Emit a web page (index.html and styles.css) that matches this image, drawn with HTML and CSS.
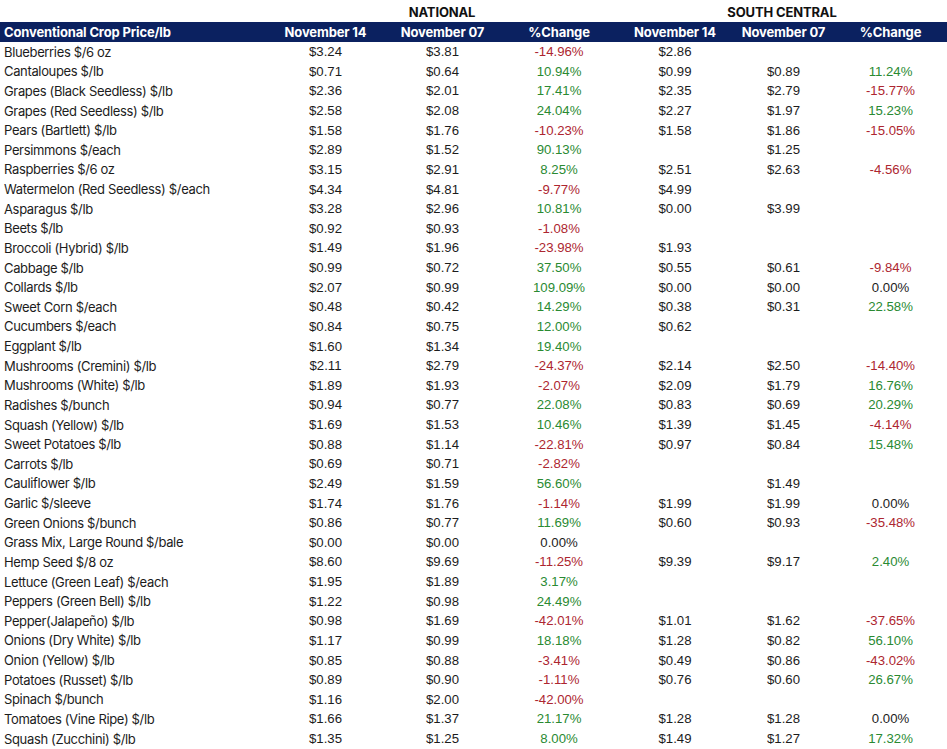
FILE: index.html
```html
<!DOCTYPE html>
<html>
<head>
<meta charset="utf-8">
<link rel="stylesheet" href="styles.css">
</head>
<body>
<div class="sheet">
  <div class="row title">
    <div class="c lab"></div>
    <div class="group national">NATIONAL</div>
    <div class="group south">SOUTH CENTRAL</div>
  </div>
  <div class="row head">
    <div class="c lab">Conventional Crop Price/lb</div>
    <div class="c">November 14</div>
    <div class="c">November 07</div>
    <div class="c">%Change</div>
    <div class="c">November 14</div>
    <div class="c">November 07</div>
    <div class="c">%Change</div>
  </div>
  <div id="rows"></div>
</div>
<script src="script.js"></script>
</body>
</html>
```

FILE: styles.css
```css
html, body {
  margin: 0;
  padding: 0;
  background: #ffffff;
}
.sheet {
  width: 947px;
  color: #1c1c1c;
}
.row {
  display: grid;
  grid-template-columns: 267px 117px 117px 116px 116px 101px 113px;
  height: 19.63px;
  align-items: center;
}
.row.title {
  grid-template-columns: 267px 350px 330px;
  height: 22.2px;
  align-items: end;
  font-family: "Inter", "Liberation Sans", sans-serif;
  font-weight: 700;
  font-size: 13px;
  line-height: 20px;
  letter-spacing: -0.15px;
  color: #111;
}
.group {
  text-align: center;
}
.row.head {
  background: #0b2160;
  color: #ffffff;
  font-family: "Inter", "Liberation Sans", sans-serif;
  font-weight: 700;
  font-size: 13px;
}
.c {
  text-align: center;
  font-family: "Liberation Sans", Arial, sans-serif;
  font-size: 13.2px;
  white-space: nowrap;
}
.row.head .c {
  font-family: "Inter", "Liberation Sans", sans-serif;
  font-size: 13px;
  letter-spacing: -0.15px;
}
.c.lab {
  text-align: left;
  padding-left: 4px;
  font-family: "Inter", "Liberation Sans", sans-serif;
  font-size: 13px;
  letter-spacing: -0.35px;
}
.row.head .c.lab {
  letter-spacing: -0.15px;
}
.pos { color: #2a8a32; }
.neg { color: #ad2630; }
```

FILE: script.js
```js
const data = [
["Blueberries $/6 oz","$3.24","$3.81","-14.96%","$2.86","",""],
["Cantaloupes $/lb","$0.71","$0.64","10.94%","$0.99","$0.89","11.24%"],
["Grapes (Black Seedless) $/lb","$2.36","$2.01","17.41%","$2.35","$2.79","-15.77%"],
["Grapes (Red Seedless) $/lb","$2.58","$2.08","24.04%","$2.27","$1.97","15.23%"],
["Pears (Bartlett) $/lb","$1.58","$1.76","-10.23%","$1.58","$1.86","-15.05%"],
["Persimmons $/each","$2.89","$1.52","90.13%","","$1.25",""],
["Raspberries $/6 oz","$3.15","$2.91","8.25%","$2.51","$2.63","-4.56%"],
["Watermelon (Red Seedless) $/each","$4.34","$4.81","-9.77%","$4.99","",""],
["Asparagus $/lb","$3.28","$2.96","10.81%","$0.00","$3.99",""],
["Beets $/lb","$0.92","$0.93","-1.08%","","",""],
["Broccoli (Hybrid) $/lb","$1.49","$1.96","-23.98%","$1.93","",""],
["Cabbage $/lb","$0.99","$0.72","37.50%","$0.55","$0.61","-9.84%"],
["Collards $/lb","$2.07","$0.99","109.09%","$0.00","$0.00","0.00%"],
["Sweet Corn $/each","$0.48","$0.42","14.29%","$0.38","$0.31","22.58%"],
["Cucumbers $/each","$0.84","$0.75","12.00%","$0.62","",""],
["Eggplant $/lb","$1.60","$1.34","19.40%","","",""],
["Mushrooms (Cremini) $/lb","$2.11","$2.79","-24.37%","$2.14","$2.50","-14.40%"],
["Mushrooms (White) $/lb","$1.89","$1.93","-2.07%","$2.09","$1.79","16.76%"],
["Radishes $/bunch","$0.94","$0.77","22.08%","$0.83","$0.69","20.29%"],
["Squash (Yellow) $/lb","$1.69","$1.53","10.46%","$1.39","$1.45","-4.14%"],
["Sweet Potatoes $/lb","$0.88","$1.14","-22.81%","$0.97","$0.84","15.48%"],
["Carrots $/lb","$0.69","$0.71","-2.82%","","",""],
["Cauliflower $/lb","$2.49","$1.59","56.60%","","$1.49",""],
["Garlic $/sleeve","$1.74","$1.76","-1.14%","$1.99","$1.99","0.00%"],
["Green Onions $/bunch","$0.86","$0.77","11.69%","$0.60","$0.93","-35.48%"],
["Grass Mix, Large Round $/bale","$0.00","$0.00","0.00%","","",""],
["Hemp Seed $/8 oz","$8.60","$9.69","-11.25%","$9.39","$9.17","2.40%"],
["Lettuce (Green Leaf) $/each","$1.95","$1.89","3.17%","","",""],
["Peppers (Green Bell) $/lb","$1.22","$0.98","24.49%","","",""],
["Pepper(Jalapeño) $/lb","$0.98","$1.69","-42.01%","$1.01","$1.62","-37.65%"],
["Onions (Dry White) $/lb","$1.17","$0.99","18.18%","$1.28","$0.82","56.10%"],
["Onion (Yellow) $/lb","$0.85","$0.88","-3.41%","$0.49","$0.86","-43.02%"],
["Potatoes (Russet) $/lb","$0.89","$0.90","-1.11%","$0.76","$0.60","26.67%"],
["Spinach $/bunch","$1.16","$2.00","-42.00%","","",""],
["Tomatoes (Vine Ripe) $/lb","$1.66","$1.37","21.17%","$1.28","$1.28","0.00%"],
["Squash (Zucchini) $/lb","$1.35","$1.25","8.00%","$1.49","$1.27","17.32%"]
];
const host = document.getElementById("rows");
for (const r of data) {
  const row = document.createElement("div");
  row.className = "row";
  r.forEach((v, i) => {
    const c = document.createElement("div");
    c.className = "c";
    if (i === 0) c.classList.add("lab");
    if (i === 3 || i === 6) {
      if (v.startsWith("-")) c.classList.add("neg");
      else if (v && v !== "0.00%") c.classList.add("pos");
    }
    c.textContent = v;
    row.appendChild(c);
  });
  host.appendChild(row);
}
```
